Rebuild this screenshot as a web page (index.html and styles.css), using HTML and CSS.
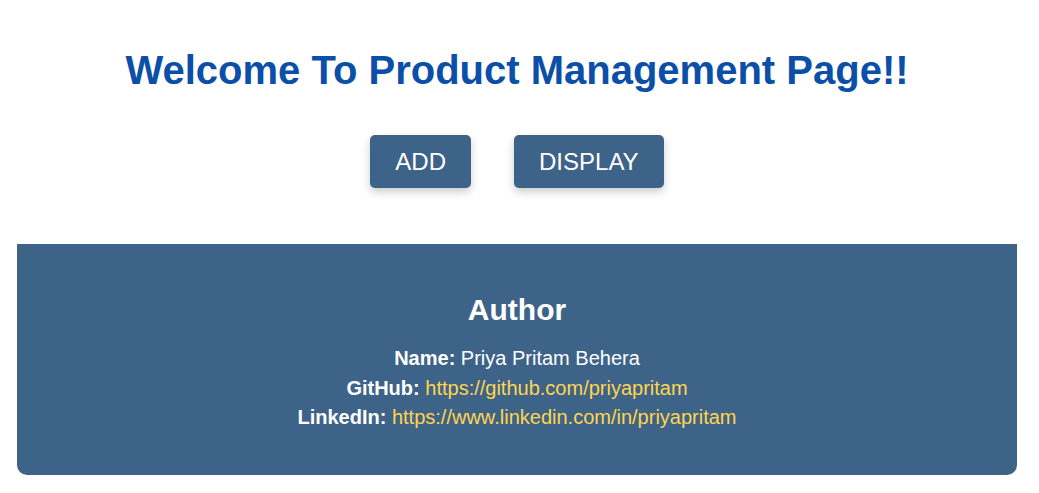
FILE: index.html
```html
<!DOCTYPE html>
<html>
<head>
<meta charset="utf-8">
<link rel="stylesheet" href="styles.css">
</head>
<body>
<div class="page">
  <h1 class="title">Welcome To Product Management Page!!</h1>
  <div class="actions">
    <button class="btn">ADD</button>
    <button class="btn">DISPLAY</button>
  </div>
  <footer class="author">
    <h2 class="author-title">Author</h2>
    <p class="line"><b>Name:</b> Priya Pritam Behera</p>
    <p class="line"><b>GitHub:</b> <a href="#">https://github.com/priyapritam</a></p>
    <p class="line"><b>LinkedIn:</b> <a href="#">https://www.linkedin.com/in/priyapritam</a></p>
  </footer>
</div>
</body>
</html>
```
FILE: styles.css
```css
body {
  margin: 0;
  font-family: "Liberation Sans", Arial, sans-serif;
  background: #fff;
}
.page {
  width: 1000px;
  margin-left: 17px;
  padding-top: 45px;
}
.title {
  margin: 0;
  text-align: center;
  color: #0b4fa8;
  font-size: 40px;
  font-weight: bold;
  line-height: 50px;
}
.actions {
  display: flex;
  justify-content: center;
  gap: 43px;
  margin-top: 40px;
}
.btn {
  height: 53px;
  padding: 0 25px;
  border: none;
  border-radius: 5px;
  background: #3e6389;
  color: #fff;
  font-family: "Liberation Sans", Arial, sans-serif;
  font-size: 24px;
  box-shadow: 0 4px 8px rgba(0,0,0,0.2);
}
.author {
  margin-top: 56px;
  background: #3e6389;
  color: #fff;
  text-align: center;
  border-radius: 0 0 10px 10px;
  padding: 48px 0 42px;
}
.author-title {
  margin: 0 0 16px;
  font-size: 30px;
  line-height: 36px;
}
.line {
  margin: 0;
  font-size: 20px;
  line-height: 29.5px;
}
.line a {
  color: #ffd54f;
  text-decoration: none;
}
```
